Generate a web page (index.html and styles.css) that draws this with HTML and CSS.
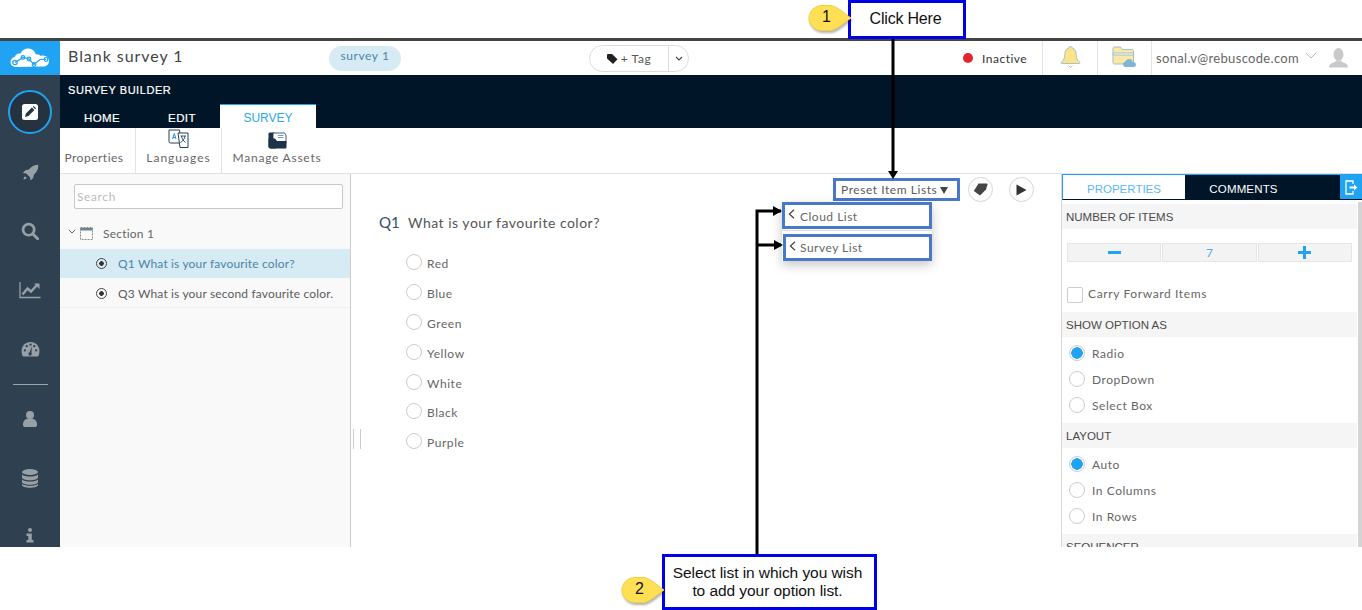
FILE: index.html
```html
<!DOCTYPE html>
<html lang="en">
<head>
<meta charset="utf-8">
<title>Survey Builder</title>
<link rel="stylesheet" href="styles.css">
</head>
<body>
<div class="shot">
  <div class="top-gap"></div>
  <div class="app">
    <aside class="rail">
      <div class="logo">
        <svg width="40" height="24" viewBox="0 0 40 24"><path fill="#fff" d="M6 21c-3.500 0-5.500-2.400-5.500-5 0-2.500 1.700-4.500 4.200-4.900C5.500 8.300 8 7 10.500 7.600 12 4 15 2.500 18 2.500c4 0 7 2.600 7.800 6 1.800-.6 3.900.2 4.900 1.500 1-.4 2.300-.5 3.300-.3 2.700.4 5 2.400 5 5.200 0 3.200-2.600 5.600-5.800 5.600z"/><g fill="none" stroke="#1fa3f2" stroke-width="1.200"><path d="M5 16.500l8-5 6 1.500 5 5.500 6-5h6"/><circle cx="5" cy="16.500" r="2.200"/><circle cx="13" cy="11.500" r="1.800"/><circle cx="19" cy="13" r="1.800"/><circle cx="24" cy="18.500" r="1.800"/><circle cx="36" cy="13.500" r="1.800"/></g></svg>
      </div>
      <nav class="rail-nav">
        <div class="rail-item rail-active">
          <span class="ring"><svg width="16" height="16" viewBox="0 0 16 16"><rect width="16" height="16" rx="2.500" fill="#fff"/><path fill="#24333f" d="M3 13l.9-3.400 6-6 2.500 2.500-6 6zM10.800 2.800l.9-.8 2.300 2.300-.8.900z"/></svg></span>
        </div>
        <div class="rail-item"><svg width="17" height="17" viewBox="0 0 22 22"><path fill="#97a0a6" d="M21 1c-5 .2-9 2-12 6L4.500 8 1 11.500l4.500.7 4.800 4.800.7 4.500 3.500-3.500 1-4.500c4-3 5.800-7 5.500-12.500zM3.800 15.700C2.500 17 2 19 1.800 20.200 3 20 5 19.500 6.300 18.200z"/></svg></div>
        <div class="rail-item"><svg width="18" height="18" viewBox="0 0 20 20"><circle cx="8.500" cy="8.500" r="6.200" fill="none" stroke="#97a0a6" stroke-width="3"/><path d="M13 13l5.500 5.500" stroke="#97a0a6" stroke-width="3.200" stroke-linecap="round"/></svg></div>
        <div class="rail-item"><svg width="22" height="18" viewBox="0 0 22 18"><path d="M1 1v15.500h20.500" fill="none" stroke="#97a0a6" stroke-width="1.300"/><path d="M3.500 13.500l5-6 3.500 3 6-6.500" fill="none" stroke="#97a0a6" stroke-width="2.400"/><path fill="#97a0a6" d="M15 2.500h5.500V8z"/></svg></div>
        <div class="rail-item"><svg width="19" height="15" viewBox="0 0 20 16"><path fill="#97a0a6" d="M10 0C4.500 0 .5 4.200.5 9.500c0 2.300.5 4.300 1.500 6h16c1-1.700 1.500-3.700 1.500-6C19.500 4.200 15.500 0 10 0z"/><g fill="#2f4050"><circle cx="4" cy="9" r="1.200"/><circle cx="6" cy="4.500" r="1.200"/><circle cx="10" cy="2.800" r="1.200"/><circle cx="14" cy="4.500" r="1.200"/><circle cx="16" cy="9" r="1.200"/><path d="M11.500 4.500L9 11a1.800 1.800 0 1 0 2 .5z"/></g></svg></div>
        <div class="rail-rule"></div>
        <div class="rail-item"><svg width="14" height="16" viewBox="0 0 14 16"><circle cx="7" cy="4" r="4" fill="#97a0a6"/><path fill="#97a0a6" d="M0 14c0-5 2.500-6.500 7-6.500s7 1.500 7 6.500c0 1.500-1 2-2 2H2c-1 0-2-.5-2-2z"/></svg></div>
        <div class="rail-item"><svg width="16" height="19" viewBox="0 0 16 19"><g fill="#97a0a6"><ellipse cx="8" cy="3" rx="8" ry="3"/><path d="M0 5.500c1.500 1.400 4.500 2 8 2s6.500-.6 8-2v3c0 1.500-3.500 2.800-8 2.800S0 10 0 8.500zM0 10.500c1.500 1.400 4.500 2 8 2s6.500-.6 8-2V13c0 1.500-3.500 2.800-8 2.800S0 14.500 0 13zM0 14.800c1.500 1.400 4.500 2 8 2s6.500-.6 8-2V16c0 1.500-3.500 2.800-8 2.800S0 17.500 0 16z"/></g></svg></div>
        <div class="rail-item rail-info"><svg width="8" height="15" viewBox="0 0 8 15"><g fill="#97a0a6"><circle cx="4" cy="2" r="2"/><path d="M.5 5.500h5.300V12H7.500v2.500H.5V12h1.800V8H.5z"/></g></svg></div>
      </nav>
    </aside>

    <div class="work">
      <header class="head">
        <div class="head-left">
          <span class="title">Blank survey 1</span>
          <span class="pill">survey 1</span>
        </div>
        <div class="tag-btn">
          <span class="tag-main"><svg width="11" height="10" viewBox="0 0 11 10"><path fill="#222" d="M0 1.200C0 .5.500 0 1.200 0H5l5.500 5.200L6 10 0 4.500z"/></svg>+ Tag</span>
          <span class="tag-caret"><svg width="8" height="5" viewBox="0 0 8 5"><path d="M1 1l3 3 3-3" fill="none" stroke="#444" stroke-width="1.100"/></svg></span>
        </div>
        <div class="head-right">
          <div class="status"><span class="dot"></span>Inactive</div>
          <div class="head-icon"><svg width="21" height="24" viewBox="0 0 21 24"><path fill="#fbe38a" stroke="#8fb7c9" stroke-width=".8" d="M10.500 1.500c1 0 1.700.7 1.700 1.500 3 .8 4 3.500 4 6.500 0 3.500 1 5.500 3.800 8 0 .7-.3 1-1 1H2c-.7 0-1-.3-1-1 2.800-2.500 3.800-4.500 3.800-8 0-3 1-5.700 4-6.500 0-.8.700-1.500 1.700-1.500z"/><path d="M8.500 20.500l2 2 2-2" fill="none" stroke="#a9c6d4"/></svg></div>
          <div class="head-icon head-folder"><svg width="25" height="22" viewBox="0 0 25 22"><path fill="#fce9a6" stroke="#9fbfcb" d="M1 2.500c0-.8.500-1.500 1.500-1.500h6l2 2.500H20c1 0 1.500.6 1.500 1.500v13H2.500c-1 0-1.500-.6-1.500-1.500z"/><path fill="#fff" stroke="#9fbfcb" d="M1 7h20.500v2H1z"/><path fill="#7fb6d3" d="M14 21c-2 0-3-1.200-3-2.700s1-2.500 2.300-2.600c.6-1.700 2-2.700 3.700-2.700 2 0 3.500 1.300 3.800 3 1.800.1 3.200 1.100 3.200 2.700S22.500 21 21 21z"/></svg></div>
          <div class="user"><span>sonal.v@rebuscode.com</span><svg width="12" height="7" viewBox="0 0 12 7"><path d="M1 1l5 5 5-5" fill="none" stroke="#aaa" stroke-width=".8"/></svg></div>
          <div class="avatar"><svg width="19" height="20" viewBox="0 0 19 20"><g fill="#c9c9c9"><ellipse cx="9.500" cy="6.500" rx="5" ry="6.500"/><path d="M0 19.500c0-3.500 3-4.500 6-5.500l1-1.500c1.500 1 3.500 1 5 0l1 1.500c3 1 6 2 6 5.500z"/></g></svg></div>
        </div>
      </header>

      <div class="band">
        <div class="band-title">SURVEY BUILDER</div>
        <div class="tabs">
          <span class="tab tab-home">HOME</span>
          <span class="tab tab-edit">EDIT</span>
          <span class="tab tab-on">SURVEY</span>
        </div>
      </div>

      <div class="tools">
        <div class="tool tool-props"><span>Properties</span></div>
        <div class="tool tool-lang">
          <svg width="21" height="20" viewBox="0 0 21 20"><path fill="#fff" stroke="#24405a" stroke-width="1" d="M1 1h10.500l2 13H2.500a1.500 1.500 0 0 1-1.500-1.500z"/><path fill="#fff" stroke="#24405a" stroke-width="1" d="M10 4h10v14.500h-8z"/><path d="M4.500 10l1.800-5.500L8 10M5 8.500h2.600" fill="none" stroke="#2d8fd6" stroke-width="1"/><path d="M12.500 7h5.500M13.500 7c.5 3 2 5 4 6.500M17 7c-.5 3-2 5-4.500 6.500" fill="none" stroke="#24405a" stroke-width=".9"/></svg>
          <span>Languages</span>
        </div>
        <div class="tool tool-assets">
          <svg width="19" height="17" viewBox="0 0 19 17"><path fill="#1d3348" d="M.5 2C.5 1 1 .5 2 .5h4.500l1.500 2v14H2.500C1.500 16.500.5 15.500.5 14.500z"/><path fill="#fff" stroke="#1d3348" stroke-width=".8" d="M5 1h11.500l1.500 2v8H5z"/><path stroke="#4f93cf" stroke-width=".9" d="M10 3.500h5.500M10 5.500h5.500"/><path fill="#1d3348" d="M.5 6.500h6.500l2 2.500h9.500v6c0 1-.5 1.500-1.500 1.500H2.500c-1 0-2-1-2-2z"/></svg>
          <span>Manage Assets</span>
        </div>
      </div>

      <div class="panes">
        <section class="tree">
          <div class="search">Search</div>
          <div class="section-row">
            <svg class="sec-caret" width="8" height="5" viewBox="0 0 8 5"><path d="M.8.800L4 4 7.200.800" fill="none" stroke="#666" stroke-width="1"/></svg>
            <svg class="sec-cal" width="13" height="13" viewBox="0 0 13 13"><rect x=".5" y=".5" width="12" height="12" fill="none" stroke="#8b8b8b" stroke-dasharray="2 1"/><path d="M.5 1h12v2.500H.5z" fill="#6e8291"/></svg>
            <span>Section 1</span>
          </div>
          <div class="q-row q-on"><span class="q-dot"></span>Q1 What is your favourite color?</div>
          <div class="q-row"><span class="q-dot"></span>Q3 What is your second favourite color.</div>
        </section>

        <section class="stage">
          <div class="splitter"></div>
          <div class="stage-tools">
            <div class="preset"><span>Preset Item Lists</span><i class="tri"></i></div>
            <span class="round round-tag"><svg width="15" height="13" viewBox="0 0 15 13"><path fill="#444" d="M5.500.500h8.200c.6 0 .9.400.8 1L13 6.500 7 12.500.8 8z"/></svg></span>
            <span class="round"><svg width="11" height="12" viewBox="0 0 11 12"><path fill="#333" d="M.500.500L10.500 6 .500 11.500z"/></svg></span>
          </div>
          <div class="question"><span class="q-no">Q1</span>What is your favourite color?</div>
          <ul class="options">
            <li><span class="radio"></span>Red</li>
            <li><span class="radio"></span>Blue</li>
            <li><span class="radio"></span>Green</li>
            <li><span class="radio"></span>Yellow</li>
            <li><span class="radio"></span>White</li>
            <li class="opt-tight"><span class="radio"></span>Black</li>
            <li><span class="radio"></span>Purple</li>
          </ul>
          <div class="menu">
            <div class="menu-item"><svg width="7" height="10" viewBox="0 0 7 10"><path d="M6 .800L1.400 5 6 9.200" fill="none" stroke="#444" stroke-width="1.200"/></svg><span>Cloud List</span></div>
            <div class="menu-item menu-second"><svg width="7" height="10" viewBox="0 0 7 10"><path d="M6 .800L1.400 5 6 9.200" fill="none" stroke="#444" stroke-width="1.200"/></svg><span>Survey List</span></div>
          </div>
        </section>

        <aside class="props">
          <div class="props-tabs">
            <span class="ptab ptab-on">PROPERTIES</span>
            <span class="ptab ptab-off">COMMENTS</span>
            <span class="ptab-exit"><svg width="13" height="15" viewBox="0 0 13 15"><path d="M8 4V1H1v13h7v-3" fill="none" stroke="#fff" stroke-width="1.300"/><path d="M4.500 6.500h4.500V4.500l3.500 3-3.500 3v-2H4.500z" fill="#fff"/></svg></span>
          </div>
          <div class="props-body">
            <h3 class="group group-first">NUMBER OF ITEMS</h3>
            <div class="stepper">
              <span class="step"><i class="minus"></i></span>
              <span class="step step-val">7</span>
              <span class="step"><i class="plus"></i></span>
            </div>
            <label class="carry"><span class="check"></span>Carry Forward Items</label>
            <h3 class="group">SHOW OPTION AS</h3>
            <div class="choices">
              <div class="choice"><span class="radio radio-on"></span>Radio</div>
              <div class="choice"><span class="radio"></span>DropDown</div>
              <div class="choice"><span class="radio"></span>Select Box</div>
            </div>
            <h3 class="group">LAYOUT</h3>
            <div class="choices">
              <div class="choice"><span class="radio radio-on"></span>Auto</div>
              <div class="choice"><span class="radio"></span>In Columns</div>
              <div class="choice"><span class="radio"></span>In Rows</div>
            </div>
            <h3 class="group">SEQUENCER</h3>
          </div>
          <div class="props-scroll"></div>
        </aside>
      </div>
    </div>
  </div>

  <svg class="arrows" width="1362" height="610" viewBox="0 0 1362 610">
    <path d="M893 38v135" stroke="#000" stroke-width="3" fill="none"/>
    <path d="M888 171h10l-5 8z" fill="#000"/>
    <path d="M757 554V211h24" stroke="#000" stroke-width="3" fill="none"/>
    <path d="M757 245h24" stroke="#000" stroke-width="3" fill="none"/>
    <path d="M773 206l9 5-9 5zM774 240l9 5-9 5z" fill="#000"/>
  </svg>

  <div class="note note-one">Click Here</div>
  <div class="drop drop-one"><svg width="46" height="28" viewBox="0 0 46 28"><path class="drop-shape" d="M14 1.500h8c6 0 13 7 21 12.500-8 5.500-15 12.500-21 12.500h-8C7 26.500 1 21 1 14S7 1.500 14 1.500z"/></svg><span>1</span></div>
  <div class="note note-two">Select list in which you wish<br>to add your option list.</div>
  <div class="drop drop-two"><svg width="46" height="28" viewBox="0 0 46 28"><path class="drop-shape" d="M14 1.500h8c6 0 13 7 21 12.500-8 5.500-15 12.500-21 12.500h-8C7 26.500 1 21 1 14S7 1.500 14 1.500z"/></svg><span>2</span></div>
</div>
</body>
</html>
```

FILE: styles.css
```css
* { box-sizing: border-box; }
html, body { margin: 0; padding: 0; background: #fff; overflow: hidden; }
body { font-family: "Lato", "Open Sans", sans-serif; color: #555; }
.shot { position: relative; width: 1362px; height: 610px; background: #fff; display: flex; flex-direction: column; overflow: hidden; }
.top-gap { height: 38px; flex: none; }
.app { height: 509px; flex: none; display: flex; border-top: 3px solid #444; overflow: hidden; }

.rail { width: 60px; flex: none; background: #2f4050; display: flex; flex-direction: column; }
.logo { height: 34px; flex: none; background: #1fa3f2; display: flex; align-items: center; justify-content: center; }
.rail-nav { display: flex; flex-direction: column; align-items: center; padding-top: 15px; }
.rail-item { height: 60px; width: 100%; display: flex; align-items: center; justify-content: center; flex: none; }
.rail-item + .rail-item { margin-top: -1px; }
.rail-active { height: 44px; margin-bottom: 9px; }
.ring { width: 44px; height: 44px; border-radius: 50%; border: 2px solid #1fa3f2; background: #24333f; display: flex; align-items: center; justify-content: center; }
.rail-rule { width: 35px; height: 1px; background: #9aa3a9; margin: 5px 0 4px; flex: none; }
.rail-info { height: 56px; }

.work { flex: 1; min-width: 0; display: flex; flex-direction: column; }
.head { height: 34px; flex: none; background: #fff; display: flex; align-items: stretch; position: relative; }
.head-left { width: 529px; flex: none; display: flex; align-items: center; padding-left: 8px; }
.title { font-size: 16px; letter-spacing: .95px; color: #444; width: 261px; flex: none; padding-bottom: 6px; }
.pill { width: 72px; height: 25px; border-radius: 13px; background: #d7ebf5; color: #4a86a6; font-size: 12px; letter-spacing: .6px; display: flex; align-items: center; justify-content: center; padding-bottom: 5px; }
.tag-btn { width: 100px; height: 27px; margin-top: 4px; border: 1px solid #ddd; border-radius: 14px; display: flex; font-size: 12px; letter-spacing: .6px; color: #555; flex: none; }
.tag-main { flex: 1; display: flex; align-items: center; justify-content: center; gap: 3px; border-right: 1px solid #ddd; }
.tag-caret { width: 19px; display: flex; align-items: center; justify-content: center; }
.head-right { margin-left: auto; display: flex; align-items: stretch; }
.status { width: 92px; display: flex; align-items: center; gap: 9px; padding-left: 13px; font-size: 12px; letter-spacing: .5px; color: #333; }
.dot { width: 10px; height: 10px; border-radius: 50%; background: #e0252f; flex: none; }
.head-icon { width: 55px; border-left: 1px solid #e4e4e4; display: flex; align-items: center; justify-content: center; }
.head-icon svg { margin-top: -2px; }
.head-folder { width: 54px; }
.user { border-left: 1px solid #e4e4e4; width: 167px; display: flex; align-items: center; gap: 6px; padding-left: 4px; font-size: 13px; letter-spacing: .32px; color: #666; }
.user svg { margin-top: -5px; }
.avatar { width: 44px; display: flex; align-items: center; justify-content: center; padding-right: 4px; }

.band { height: 53px; flex: none; background: #001628; display: flex; flex-direction: column; justify-content: space-between; }
.band-title { font-family: "Liberation Sans", sans-serif; font-size: 11px; color: #fff; padding: 9px 0 0 8px; letter-spacing: .55px; -webkit-text-stroke: .2px #fff; }
.tabs { display: flex; height: 24px; }
.tab { font-family: "Liberation Sans", sans-serif; font-size: 11.500px; color: #fff; display: flex; align-items: center; justify-content: center; padding-top: 3px; letter-spacing: .4px; -webkit-text-stroke: .2px #fff; }
.tab-home { width: 84px; }
.tab-edit { width: 76px; }
.tab-on { width: 96px; background: #fff; border-top: 1px solid #1fa3f2; color: #2ea7ee; font-size: 12px; letter-spacing: 0; -webkit-text-stroke: 0; }

.tools { height: 46px; flex: none; background: #fff; border-bottom: 1px solid #e2e2e2; display: flex; }
.tool { display: flex; flex-direction: column; align-items: center; justify-content: flex-end; padding-bottom: 8px; font-size: 12px; letter-spacing: .7px; color: #666; border-right: 1px solid #e4e4e4; }
.tool svg { flex: none; margin-bottom: 1px; }
.tool-props { width: 76px; padding-right: 7px; letter-spacing: .5px; }
.tool-lang { width: 86px; letter-spacing: 1px; }
.tool-assets { width: 111px; border-right: 0; letter-spacing: .75px; padding-right: 1px; }

.panes { flex: 1; min-height: 0; display: flex; }
.tree { width: 291px; flex: none; background: #f9f9f9; border-right: 1px solid #ccc; }
.search { margin: 10px 7px 0 14px; height: 25px; background: #fff; border: 1px solid #c8c8c8; border-radius: 2px; font-size: 12px; letter-spacing: .6px; color: #bbb; display: flex; align-items: center; padding-left: 2px; }
.section-row { height: 40px; display: flex; align-items: center; padding: 8px 0 0 8px; font-size: 12px; letter-spacing: .2px; color: #666; }
.sec-caret { margin-right: 4px; margin-top: -3px; }
.sec-cal { margin-right: 10px; }
.q-row { height: 30px; display: flex; align-items: center; padding: 1px 0 0 36px; font-size: 12px; letter-spacing: .16px; color: #5c5c5c; border-bottom: 1px solid #efefef; }
.q-on { background: #d7ebf5; color: #4a86a6; border-bottom: 0; height: 29px; padding-top: 0; }
.q-dot { width: 11px; height: 11px; border-radius: 50%; border: 1px solid #444; margin-right: 11px; flex: none; background: radial-gradient(circle, #333 0 2px, transparent 2.600px); }

.stage { flex: 1; min-width: 0; position: relative; background: #fff; }
.splitter { position: absolute; left: 2px; top: 255px; width: 8px; height: 20px; border-left: 1px solid #ccc; border-right: 1px solid #ccc; }
.stage-tools { height: 31px; display: flex; align-items: center; justify-content: flex-end; padding: 0 27px 0 0; gap: 16px; }
.preset { width: 127px; height: 23px; margin-right: -8px; border: 3px solid #4a78c8; display: flex; align-items: center; padding-left: 5px; font-size: 12px; letter-spacing: .55px; color: #5a5a5a; gap: 3px; }
.tri { width: 0; height: 0; border-left: 4px solid transparent; border-right: 4px solid transparent; border-top: 7px solid #444; margin-top: 1px; }
.round { width: 25px; height: 25px; border: 1px solid #d5d5d5; border-radius: 50%; display: flex; align-items: center; justify-content: center; }
.question { display: flex; margin: 6px 0 0 28px; font-size: 14px; letter-spacing: .5px; color: #555; height: 22px; align-items: center; }
.q-no { width: 29px; flex: none; font-size: 15px; color: #33506b; letter-spacing: 0; }
.options { list-style: none; margin: 15px 0 0 55px; padding: 0; }
.options li { height: 30px; display: flex; align-items: center; font-size: 12px; letter-spacing: .55px; color: #666; }
.options li.opt-tight { height: 29px; }
.radio { width: 16px; height: 16px; border-radius: 50%; border: 1px solid #ccc; background: #fff; margin-right: 5px; flex: none; margin-top: -3px; }
.menu { position: absolute; left: 431px; top: 28px; width: 150px; background: #fff; box-shadow: 0 4px 10px rgba(0,0,0,.22); }
.menu-item { height: 27px; border: 3px solid #4a78c8; display: flex; align-items: center; gap: 5px; padding-left: 3px; font-size: 12px; letter-spacing: .5px; color: #666; }
.menu-item span { padding-top: 2px; }
.menu-item svg { margin-top: -3px; }
.menu-second { margin: 5px 0 0 1px; width: 149px; position: relative; gap: 4px; }
.menu-second span { padding-top: 0; }
.menu-second::before { content: ""; position: absolute; left: -4px; right: -3px; top: -7px; height: 1px; background: #ddd; }

.props { width: 301px; flex: none; position: relative; background: #fff; border-left: 1px solid #d8d8d8; }
.props-tabs { height: 26px; display: flex; background: #001628; border-top: 1px solid #1fa3f2; position: relative; }
.ptab { font-family: "Liberation Sans", sans-serif; font-size: 11.500px; color: #fff; display: flex; align-items: center; justify-content: center; width: 123px; padding-top: 2px; }
.ptab-on { background: #fff; color: #5cb8f5; border-bottom: 1px solid #001628; border-left: 1px solid #1fa3f2; padding-top: 3px; }
.ptab-off { padding-right: 6px; letter-spacing: .15px; }
.ptab-exit { position: absolute; right: 0; top: 0; width: 22px; height: 24px; background: #1fa3f2; display: flex; align-items: center; justify-content: center; }
.props-body { width: 295px; }
.group { margin: 0; height: 25px; background: #f5f5f5; font-weight: 400; font-family: "Liberation Sans", sans-serif; font-size: 11.500px; color: #4a4a4a; display: flex; align-items: center; padding-left: 4px; }
.group-first { margin-top: 4px; }
.stepper { display: flex; margin: 14px 5px 0 5px; height: 19px; gap: 1px; }
.step { flex: 1; background: #f3f3f3; border: 1px solid #e6e6e6; display: flex; align-items: center; justify-content: center; color: #5ba5e8; font-size: 12px; }
.minus { width: 13px; height: 3px; background: #1fa3f2; display: block; }
.plus { width: 13px; height: 13px; display: block; background: linear-gradient(#1fa3f2,#1fa3f2) center/13px 3px no-repeat, linear-gradient(#1fa3f2,#1fa3f2) center/3px 13px no-repeat; }
.carry { display: flex; align-items: center; height: 16px; margin: 25px 0 0 5px; padding-bottom: 2px; font-size: 12px; letter-spacing: .62px; color: #666; line-height: 14px; }
.check { width: 16px; height: 16px; border: 1px solid #ccc; border-radius: 2px; margin-right: 5px; flex: none; align-self: flex-start; }
.carry + .group { margin-top: 9px; }
.choices { padding: 3px 0 5px; }
.choice { height: 26px; display: flex; align-items: center; padding-left: 7px; font-size: 12px; letter-spacing: .55px; color: #666; }
.choice .radio { margin: 0 7px 0 0; }
.radio-on { background: radial-gradient(circle, #1fa3f2 0 5.500px, #fff 6px); }
.props-scroll { position: absolute; right: 0; top: 28px; bottom: 0; width: 4px; background: #d4d4d4; }

.arrows { position: absolute; left: 0; top: 0; pointer-events: none; }
.note { position: absolute; background: #fff; border: 3px solid #0000e6; font-family: "Liberation Sans", sans-serif; color: #111; text-align: center; display: flex; align-items: center; justify-content: center; }
.note-one { left: 848px; top: 0; width: 118px; height: 39px; font-size: 16px; letter-spacing: -.2px; padding: 0 3px 2px 0; }
.note-two { left: 662px; top: 554px; width: 215px; height: 56px; font-size: 15.500px; line-height: 18px; letter-spacing: -.06px; padding-right: 4px; }
.drop { position: absolute; width: 46px; height: 28px; font-family: "Liberation Sans", sans-serif; font-size: 16px; color: #111; }
.drop svg { display: block; filter: drop-shadow(1px 2px 1px rgba(0,0,0,.3)); }
.drop span { position: absolute; left: 0; top: 4px; width: 37px; text-align: center; }
.drop-shape { fill: #ffe055; stroke: #f3d040; stroke-width: 1; }
.drop-one { left: 808px; top: 4px; }
.drop-two { left: 621px; top: 576px; }
```
